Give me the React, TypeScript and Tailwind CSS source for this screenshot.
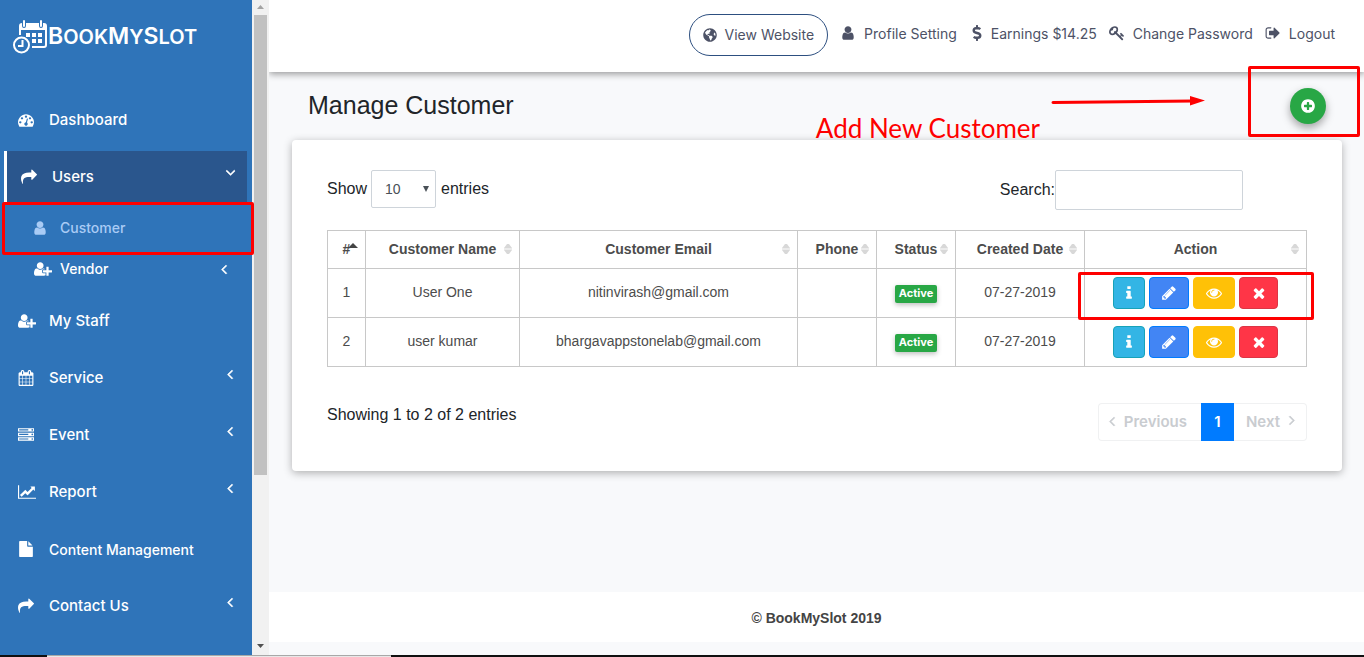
import React, { useState } from "react";
import { FaDollarSign, FaGlobeAmericas } from "react-icons/fa";

const ICONS = {
  user: "M1536 1399q0 109-62.5 187t-150.5 78h-854q-88 0-150.5-78t-62.5-187q0-85 8.5-160.5t31.5-152 58.5-131 94-89 134.5-34.5q131 128 313 128t313-128q76 0 134.5 34.5t94 89 58.5 131 31.5 152 8.5 160.5zm-256-887q0 159-112.5 271.5t-271.5 112.5-271.5-112.5-112.5-271.5 112.5-271.5 271.5-112.5 271.5 112.5 112.5 271.5z",
  share: "M1792 640q0 26-19 45l-512 512q-19 19-45 19t-45-19-19-45v-256h-224q-98 0-175.5 6t-154 21.5-133 42.5-105.5 69.5-80 101-48.5 138.5-17.5 181q0 55 5 123 0 6 2.5 23.5t2.5 26.5q0 15-8.5 25t-23.5 10q-16 0-28-17-7-9-13-22t-13.5-30-10.5-24q-127-285-127-451 0-199 53-333 162-403 875-403h224v-256q0-26 19-45t45-19 45 19l512 512q19 19 19 45z",
  userPlus: "M704 896q-159 0-271.5-112.5t-112.5-271.5 112.5-271.5 271.5-112.5 271.5 112.5 112.5 271.5-112.5 271.5-271.5 112.5zm960 128h352q13 0 22.5 9.5t9.5 22.5v192q0 13-9.5 22.5t-22.5 9.5h-352v352q0 13-9.5 22.5t-22.5 9.5h-192q-13 0-22.5-9.5t-9.5-22.5v-352h-352q-13 0-22.5-9.5t-9.5-22.5v-192q0-13 9.5-22.5t22.5-9.5h352v-352q0-13 9.5-22.5t22.5-9.5h192q13 0 22.5 9.5t9.5 22.5v352zm-736 224q0 52 38 90t90 38h256v238q-68 50-171 50h-874q-121 0-194-69t-73-190q0-53 3.5-103.5t14-109 26.5-108.5 43-97.5 62-81 85.5-53.5 111.5-20q19 0 39 17 79 61 154.5 91.5t164.5 30.5 164.5-30.5 154.5-91.5q20-17 39-17 132 0 217 96h-223q-52 0-90 38t-38 90v192z",
  gauge: "M384 1152q0-53-37.5-90.5t-90.5-37.5-90.5 37.5-37.5 90.5 37.5 90.5 90.5 37.5 90.5-37.5 37.5-90.5zm192-448q0-53-37.5-90.5t-90.5-37.5-90.5 37.5-37.5 90.5 37.5 90.5 90.5 37.5 90.5-37.5 37.5-90.5zm428 481l101-382q6-26-7.5-48.5t-38.5-29.5-48 6.5-30 39.5l-101 382q-60 5-107 43.5t-63 98.5q-20 77 20 146t117 89 146-20 89-117q16-60-6-117t-72-91zm660-33q0-53-37.5-90.5t-90.5-37.5-90.5 37.5-37.5 90.5 37.5 90.5 90.5 37.5 90.5-37.5 37.5-90.5zm-640-640q0-53-37.5-90.5t-90.5-37.5-90.5 37.5-37.5 90.5 37.5 90.5 90.5 37.5 90.5-37.5 37.5-90.5zm448 192q0-53-37.5-90.5t-90.5-37.5-90.5 37.5-37.5 90.5 37.5 90.5 90.5 37.5 90.5-37.5 37.5-90.5zm320 448q0 261-141 483-19 29-54 29h-1402q-35 0-54-29-141-221-141-483 0-182 71-348t191-286 286-191 348-71 348 71 286 191 191 286 71 348z",
  calendar: "M192 1664h288v-288h-288v288zm352 0h320v-288h-320v288zm-352-352h288v-320h-288v320zm352 0h320v-320h-320v320zm-352-384h288v-288h-288v288zm736 736h320v-288h-320v288zm-384-736h320v-288h-320v288zm768 736h288v-288h-288v288zm-384-352h320v-320h-320v320zm-352-864v-288q0-13-9.5-22.5t-22.5-9.5h-64q-13 0-22.5 9.5t-9.5 22.5v288q0 13 9.5 22.5t22.5 9.5h64q13 0 22.5-9.5t9.5-22.5zm736 864h288v-320h-288v320zm-384-384h320v-288h-320v288zm384 0h288v-288h-288v288zm32-480v-288q0-13-9.5-22.5t-22.5-9.5h-64q-13 0-22.5 9.5t-9.5 22.5v288q0 13 9.5 22.5t22.5 9.5h64q13 0 22.5-9.5t9.5-22.5zm384-64v1280q0 52-38 90t-90 38h-1408q-52 0-90-38t-38-90v-1280q0-52 38-90t90-38h128v-96q0-66 47-113t113-47h64q66 0 113 47t47 113v96h384v-96q0-66 47-113t113-47h64q66 0 113 47t47 113v96h128q52 0 90 38t38 90z",
  server: "M128 1408h1024v-128h-1024v128zm0-512h1024v-128h-1024v128zm1568 448q0-40-28-68t-68-28-68 28-28 68 28 68 68 28 68-28 28-68zm-1568-960h1024v-128h-1024v128zm1568 448q0-40-28-68t-68-28-68 28-28 68 28 68 68 28 68-28 28-68zm0-512q0-40-28-68t-68-28-68 28-28 68 28 68 68 28 68-28 28-68zm96 832v384h-1792v-384h1792zm0-512v384h-1792v-384h1792zm0-512v384h-1792v-384h1792z",
  chart: "M2048 1536v128h-2048v-1536h128v1408h1920zm-128-1248v435q0 21-19.5 29.5t-35.5-7.5l-121-121-633 633q-10 10-23 10t-23-10l-233-233-416 416-192-192 585-585q10-10 23-10t23 10l233 233 464-464-121-121q-16-16-7.5-35.5t29.5-19.5h435q14 0 23 9t9 23z",
  file: "M1152 512v-472q22 14 36 28l408 408q14 14 28 36h-472zm-128 32q0 40 28 68t68 28h544v1056q0 40-28 68t-68 28h-1344q-40 0-68-28t-28-68v-1600q0-40 28-68t68-28h800v544z",
  key: "M832 512q0-80-56-136t-136-56-136 56-56 136q0 42 19 83-41-19-83-19-80 0-136 56t-56 136 56 136 136 56 136-56 56-136q0-42-19-83 41 19 83 19 80 0 136-56t56-136zm851 704q0 17-49 66t-66 49q-9 0-28.5-16t-36.5-33-38.5-40-24.5-26l-96 96 220 220q28 28 28 68 0 42-39 81t-81 39q-40 0-68-28l-671-671q-176 131-365 131-163 0-265.5-102.5t-102.5-265.5q0-160 95-313t248-248 313-95q163 0 265.5 102.5t102.5 265.5q0 189-131 365l355 355 96-96q-3-3-26-24.5t-40-38.5-33-36.5-16-28.5q0-17 49-66t66-49q13 0 23 10 6 6 46 44.5t82 79.5 86.5 86 73 78 28.5 41z",
  signOut: "M704 1440q0 4 1 20t.5 26.5-3 23.5-10 19.5-20.5 6.5h-320q-119 0-203.5-84.5t-84.5-203.5v-704q0-119 84.5-203.5t203.5-84.5h320q13 0 22.5 9.5t9.5 22.5q0 4 1 20t.5 26.5-3 23.5-10 19.5-20.5 6.5h-320q-66 0-113 47t-47 113v704q0 66 47 113t113 47h312l11.5 1 11.5 3 8 5.5 7 9 2 13.5zm928-544q0 26-19 45l-544 544q-19 19-45 19t-45-19-19-45v-288h-448q-26 0-45-19t-19-45v-384q0-26 19-45t45-19h448v-288q0-26 19-45t45-19 45 19l544 544q19 19 19 45z",
  info: "M1216 1344v128q0 26-19 45t-45 19h-512q-26 0-45-19t-19-45v-128q0-26 19-45t45-19h64v-384h-64q-26 0-45-19t-19-45v-128q0-26 19-45t45-19h384q26 0 45 19t19 45v576h64q26 0 45 19t19 45zm-128-1152v192q0 26-19 45t-45 19h-256q-26 0-45-19t-19-45v-192q0-26 19-45t45-19h256q26 0 45 19t19 45z",
  pencil: "M491 1536l91-91-235-235-91 91v107h128v128h107zm523-928q0-22-22-22-10 0-17 7l-542 542q-7 7-7 17 0 22 22 22 10 0 17-7l542-542q7-7 7-17zm-54-192l416 416-832 832h-416v-416zm683 96q0 53-37 90l-166 166-416-416 166-165q36-38 90-38 53 0 91 38l235 234q37 39 37 91z",
  eye: "M1664 960q-152-236-381-353 61 104 61 225 0 185-131.5 316.5t-316.5 131.5-316.5-131.5-131.5-316.5q0-121 61-225-229 117-381 353 133 205 333.5 326.5t434.5 121.5 434.5-121.5 333.5-326.5zm-720-384q0-20-14-34t-34-14q-125 0-214.5 89.5t-89.5 214.5q0 20 14 34t34 14 34-14 14-34q0-86 61-147t147-61q20 0 34-14t14-34zm848 384q0 34-20 69-140 230-376.5 368.5t-499.5 138.5-499.5-139-376.5-368q-20-35-20-69t20-69q140-229 376.5-368t499.5-139 499.5 139 376.5 368q20 35 20 69z",
  times: "M1490 1322q0 40-28 68l-136 136q-28 28-68 28t-68-28l-294-294-294 294q-28 28-68 28t-68-28l-136-136q-28-28-28-68t28-68l294-294-294-294q-28-28-28-68t28-68l136-136q28-28 68-28t68 28l294 294 294-294q28-28 68-28t68 28l136 136q28 28 28 68t-28 68l-294 294 294 294q28 28 28 68z",
  plusCircle: "M1344 960v-128q0-26-19-45t-45-19h-256v-256q0-26-19-45t-45-19h-128q-26 0-45 19t-19 45v256h-256q-26 0-45 19t-19 45v128q0 26 19 45t45 19h256v256q0 26 19 45t45 19h128q26 0 45-19t19-45v-256h256q26 0 45-19t19-45zm320-64q0 209-103 385.5t-279.5 279.5-385.5 103-385.5-103-279.5-279.5-103-385.5 103-385.5 279.5-279.5 385.5-103 385.5 103 279.5 279.5 103 385.5z",
  angle: "M1203 544q0 13-10 23l-393 393 393 393q10 10 10 23t-10 23l-50 50q-10 10-23 10t-23-10l-466-466q-10-10-10-23t10-23l466-466q10-10 23-10t23 10l50 50q10 10 10 23z",
};

type IconName = keyof typeof ICONS;

function Icon({ name, className = "" }: { name: IconName; className?: string }) {
  const wide = name === "userPlus" || name === "chart";
  return (
    <svg
      aria-hidden="true"
      viewBox={wide ? "0 0 2048 1792" : "0 0 1792 1792"}
      fill="currentColor"
      stroke={name === "angle" ? "currentColor" : "none"}
      strokeWidth="60"
      className={`h-4 shrink-0 ${wide ? "w-[18px]" : "w-4"} ${className}`}
    >
      <path d={ICONS[name]} />
    </svg>
  );
}

function Logo() {
  return (
    <a href="#home" className="flex items-center pl-3 pt-[18px] text-white">
      <svg aria-hidden="true" viewBox="0 0 36 36" className="h-9 w-9 shrink-0">
        <path d="M8 16V7q0-2 2-2h22q2 0 2 2v19q0 2-2 2H20" fill="none" stroke="currentColor" strokeWidth="2" />
        <path d="M8 5h26v6H8z" fill="currentColor" />
        <path d="M12 2v5M29 2v5" stroke="#2f74b9" strokeWidth="4" strokeLinecap="round" />
        <path d="M12 2v5M29 2v5" stroke="currentColor" strokeWidth="2" strokeLinecap="round" />
        <path d="M14 14h4v4h-4zM20 14h4v4h-4zM26 14h4v4h-4zM20 20h4v4h-4zM26 20h4v4h-4z" fill="currentColor" />
        <circle cx="9.500" cy="26" r="7.500" fill="none" stroke="currentColor" strokeWidth="2" />
        <path d="M10.500 21v6H6" fill="none" stroke="currentColor" strokeWidth="2" />
      </svg>
      <span className="font-['Inter',sans-serif] text-[23px] font-semibold leading-9">
        B<span className="text-[20px]">OOK</span>M<span className="text-[20px]">Y</span>S<span className="text-[20px]">LOT</span>
      </span>
    </a>
  );
}

function NavItem({ icon, label, arrow, small }: { icon: IconName; label: string; arrow?: boolean; small?: boolean }) {
  return (
    <a href="#section" className={`flex h-[57px] items-center pl-[18px] pr-3.5 ${small ? "text-sm" : ""}`}>
      <span className="flex w-[31px] pb-0.5"><Icon name={icon} /></span>
      <span className="flex-1">{label}</span>
      {arrow && <Icon name="angle" className="mb-2.5" />}
    </a>
  );
}

function Sidebar() {
  return (
    <nav className="flex w-[252px] shrink-0 flex-col bg-[#2f74b9] font-['Inter',sans-serif] text-[15px] font-medium text-white">
      <Logo />
      <div className="mt-[37px]">
        <NavItem icon="gauge" label="Dashboard" />
        <a href="#users" className="ml-1 mr-[5px] mt-0.5 flex h-[52px] items-center border-l-[3px] border-white bg-[#2a568d] pl-[14px] pr-[9px]">
          <span className="flex w-[31px]"><Icon name="share" /></span>
          <span className="flex-1">Users</span>
          <Icon name="angle" className="mb-2 -rotate-90" />
        </a>
        <div className="text-sm">
          <a href="#customer" className="relative flex h-[51px] items-center pb-0.5 pl-8 text-[#a9cbf5]">
            <span className="flex w-7"><Icon name="user" /></span>
            Customer
            <span className="absolute -bottom-px -right-[2px] -top-px left-[2px] rounded-xs border-[3px] border-[#fe0000]" />
          </a>
          <a href="#vendor" className="flex h-8 items-center pb-0.5 pl-[34px] pr-5">
            <span className="flex w-[26px]"><Icon name="userPlus" /></span>
            <span className="flex-1">Vendor</span>
            <Icon name="angle" />
          </a>
        </div>
        <div className="mt-[7px]">
          <NavItem icon="userPlus" label="My Staff" />
          <NavItem icon="calendar" label="Service" arrow />
          <NavItem icon="server" label="Event" arrow />
          <NavItem icon="chart" label="Report" arrow />
          <NavItem icon="file" label="Content Management" small />
          <NavItem icon="share" label="Contact Us" arrow />
        </div>
      </div>
    </nav>
  );
}

function ScrollTrack() {
  return (
    <div aria-hidden="true" className="flex w-[17px] shrink-0 flex-col items-center bg-[#f1f1f1]">
      <svg viewBox="0 0 17 15" className="h-[15px] w-[17px] shrink-0"><path d="M5 9h7L8.500 5z" fill="#a3a3a3" /></svg>
      <div className="w-[13px] grow-[460] bg-[#c1c1c1]" />
      <div className="grow-[163]" />
      <svg viewBox="0 0 17 17" className="h-[17px] w-[17px] shrink-0"><path d="M5 6h7l-3.500 4z" fill="#505050" /></svg>
    </div>
  );
}

function TopBar() {
  return (
    <header className="relative flex h-[72px] items-center justify-end bg-white pb-1 pr-[29px] font-['Inter',sans-serif] text-sm text-[#4d5266] shadow-[0_2px_7px_rgba(0,0,0,0.4)]">
      <a href="#site" className="mr-3 mt-0.5 flex h-[42px] items-center gap-2 rounded-[21px] border border-[#2d4f80] px-[13px]">
        <FaGlobeAmericas className="size-[14px]" />View Website
      </a>
      <a href="#profile" className="mr-3 flex items-center gap-2"><Icon name="user" className="mb-0.5" />Profile Setting</a>
      <a href="#earnings" className="mr-3 flex items-center gap-1.5"><FaDollarSign className="mb-0.5 size-4" />Earnings $14.25</a>
      <a href="#password" className="mr-3 flex items-center gap-2"><Icon name="key" className="mb-0.5" />Change Password</a>
      <a href="#logout" className="flex items-center gap-2"><Icon name="signOut" className="mb-0.5" />Logout</a>
    </header>
  );
}

const COLUMNS = [
  { title: "#", width: "w-[38px]" },
  { title: "Customer Name", width: "w-[154px]" },
  { title: "Customer Email", width: "" },
  { title: "Phone", width: "w-[79px]" },
  { title: "Status", width: "w-[79px]" },
  { title: "Created Date", width: "w-[129px]" },
  { title: "Action", width: "w-[222px]" },
];

const ROWS = [
  { name: "User One", email: "nitinvirash@gmail.com", date: "07-27-2019" },
  { name: "user kumar", email: "bhargavappstonelab@gmail.com", date: "07-27-2019" },
];

const ACTIONS: { icon: IconName; label: string; style: string }[] = [
  { icon: "info", label: "Details", style: "w-8 border-[#17a2b8] bg-[#33b5e5]" },
  { icon: "pencil", label: "Edit", style: "w-10 border-[#007bff] bg-[#4285f4]" },
  { icon: "eye", label: "View", style: "w-[42px] border-[#ffc107] bg-[#ffc107]" },
  { icon: "times", label: "Delete", style: "w-[39px] border-[#dc3545] bg-[#ff3547]" },
];

function SortMark({ active }: { active: boolean }) {
  return active ? (
    <svg aria-hidden="true" viewBox="0 0 10 5" className="absolute right-[7px] top-3 h-[5px] w-2.5 text-[#444]">
      <path d="M0 5l5-5 5 5z" fill="currentColor" />
    </svg>
  ) : (
    <svg aria-hidden="true" viewBox="0 0 8 10" className="absolute right-[7px] top-[13px] h-2.5 w-2 text-[#d8d8d8]">
      <path d="M0 4.500V4l3-4h2l3 4v.5zM0 5.500V6l3 4h2l3-4v-.5z" fill="currentColor" />
    </svg>
  );
}

function CustomerTable() {
  return (
    <table className="w-full table-fixed border-collapse text-center text-sm text-[#4c4c4c]">
      <thead>
        <tr className="h-[38px]">
          {COLUMNS.map((c, i) => (
            <th key={c.title} scope="col" className={`relative border border-[#c8c8c8] p-0 pb-0.5 ${c.width}`}>
              {c.title}
              <SortMark active={i === 0} />
            </th>
          ))}
        </tr>
      </thead>
      <tbody>
        {ROWS.map((r, i) => (
          <tr key={r.name} className="h-[49px] *:border *:border-[#c8c8c8]">
            <td className="p-0 pb-0.5">{i + 1}</td>
            <td className="p-0 pb-0.5">{r.name}</td>
            <td className="p-0 pb-0.5">{r.email}</td>
            <td className="p-0 pb-0.5" />
            <td className="p-0 pb-0.5">
              <span className="mt-0.5 inline-block h-[18px] rounded-xs bg-[#28a745] px-1 font-['Inter',sans-serif] text-[11px] font-bold leading-[17px] text-white shadow-[0_2px_5px_rgba(0,0,0,0.25)]">Active</span>
            </td>
            <td className="p-0 pb-0.5">{r.date}</td>
            <td className="relative p-0">
              <div className="flex justify-center gap-1">
                {ACTIONS.map((a) => (
                  <button key={a.label} type="button" aria-label={a.label} className={`flex h-8 items-center justify-center rounded border text-white ${a.style}`}>
                    <Icon name={a.icon} />
                  </button>
                ))}
              </div>
              {i === 0 && <span className="absolute -left-[7px] -right-[8px] top-[3px] h-12 rounded-xs border-[3px] border-[#fe0000]" />}
            </td>
          </tr>
        ))}
      </tbody>
    </table>
  );
}

export default function App() {
  const [size, setSize] = useState("10");
  const [query, setQuery] = useState("");
  return (
    <div className="flex h-screen flex-col overflow-hidden bg-[#f8f9fb] font-['Liberation_Sans',sans-serif] text-[#212529]">
      <div className="flex min-h-0 flex-1">
        <Sidebar />
        <ScrollTrack />
        <div className="flex min-w-0 flex-1 flex-col overflow-hidden">
          <TopBar />
          <main className="flex-1 pl-[23px] pr-[22px]">
            <div className="relative flex h-[68px] items-center justify-between px-4">
              <h1 className="text-[25px]">Manage Customer</h1>
              <button type="button" aria-label="Add new customer" className="flex size-9 items-center justify-center rounded-full bg-[#28a745] text-white shadow-[0_4px_8px_rgba(0,0,0,0.35)]">
                <Icon name="plusCircle" />
              </button>
              <span className="absolute right-[302px] top-[37px] whitespace-nowrap font-['Lato',sans-serif] text-[26px] text-[#fe0000]">Add New Customer</span>
              <svg aria-hidden="true" viewBox="0 0 154 12" className="absolute right-[137px] top-[22px] h-3 w-[154px] text-[#fe0000]">
                <path d="M2 8.500L142 7" stroke="currentColor" strokeWidth="3" strokeLinecap="round" />
                <path d="M139 2l15 4.500-15 5z" fill="currentColor" />
              </svg>
              <span className="pointer-events-none absolute -right-[18px] -top-[6px] h-[71px] w-28 rounded-xs border-[3px] border-[#fe0000]" />
            </div>
            <section className="rounded bg-white px-[35px] pb-[30px] pt-[30px] shadow-[0_2px_8px_rgba(0,0,0,0.3)]">
              <div className="flex h-[60px] items-start justify-between pr-16">
                <label className="flex items-center gap-1">
                  Show
                  <span className="relative flex">
                    <select value={size} onChange={(e) => setSize(e.target.value)} className="h-[38px] w-[65px] appearance-none rounded-xs border border-[#ced4da] bg-white pl-[13px] text-sm text-[#495057]">
                      <option>10</option>
                      <option>25</option>
                      <option>50</option>
                    </select>
                    <svg aria-hidden="true" viewBox="0 0 6 6" className="pointer-events-none absolute right-[7px] top-4 size-1.5"><path d="M0 0h6L3 6z" fill="#495057" /></svg>
                  </span>
                  <span className="pl-px">entries</span>
                </label>
                <label className="flex items-center">
                  Search:
                  <input type="search" value={query} onChange={(e) => setQuery(e.target.value)} className="h-10 w-[188px] rounded-xs border border-[#ced4da] px-2" />
                </label>
              </div>
              <CustomerTable />
              <div className="mt-9 flex items-start justify-between">
                <p>Showing 1 to 2 of 2 entries</p>
                <div className="flex h-[38px] items-stretch font-['Inter',sans-serif] text-[15px] font-semibold text-[#c9ccd0]">
                  <button type="button" disabled className="flex items-center gap-1 rounded-l border border-r-0 border-[#f0f1f2] pl-[5px] pr-3.5">
                    <Icon name="angle" className="mb-0.5" />Previous
                  </button>
                  <button type="button" aria-current="page" className="w-[33px] bg-[#007bff] text-white">1</button>
                  <button type="button" disabled className="flex items-center gap-1 rounded-r border border-l-0 border-[#f0f1f2] pl-3 pr-1.5">
                    Next<Icon name="angle" className="mb-0.5 rotate-180" />
                  </button>
                </div>
              </div>
            </section>
          </main>
          <footer className="mb-[13px] flex h-[50px] items-center justify-center bg-white pt-0.5 text-sm font-bold text-[#444]">© BookMySlot 2019</footer>
        </div>
      </div>
      <div aria-hidden="true" className="flex h-0.5 shrink-0 bg-[#101010]">
        <div className="ml-[47px] w-[344px] border-t border-[#a8a8a8] bg-[#e8e8e8]" />
      </div>
    </div>
  );
}
